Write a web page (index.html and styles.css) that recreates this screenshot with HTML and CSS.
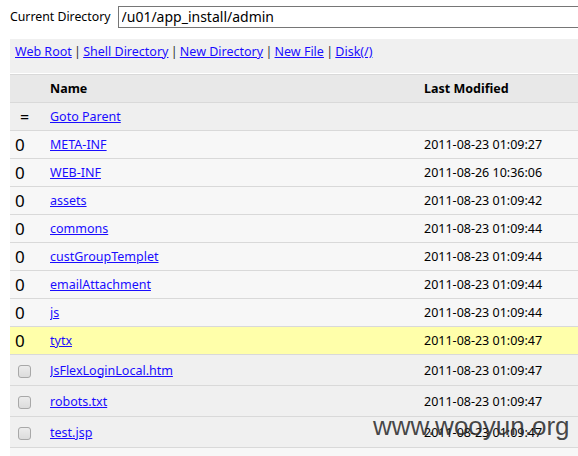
FILE: index.html
```html
<!DOCTYPE html>
<html>
<head>
<meta charset="utf-8">
<link rel="stylesheet" href="styles.css">
</head>
<body>
<div class="page">
  <form class="dirbar">
    <label class="dirlabel">Current Directory</label>
    <input class="dirinput" type="text" value="/u01/app_install/admin">
  </form>
  <div class="nav">
    <a href="#">Web Root</a> | <a href="#">Shell Directory</a> | <a href="#">New Directory</a> | <a href="#">New File</a> | <a href="#">Disk(/)</a>
  </div>
  <table class="files">
    <colgroup><col class="c1"><col class="c2"><col class="c3"></colgroup>
    <thead>
      <tr class="head"><th class="ic"></th><th class="nm">Name</th><th class="dt">Last Modified</th></tr>
    </thead>
    <tbody>
      <tr class="parent"><td class="ic eq">=</td><td class="nm"><a href="#">Goto Parent</a></td><td class="dt"></td></tr>
      <tr class="dir"><td class="ic">0</td><td class="nm"><a href="#">META-INF</a></td><td class="dt">2011-08-23 01:09:27</td></tr>
      <tr class="dir"><td class="ic">0</td><td class="nm"><a href="#">WEB-INF</a></td><td class="dt">2011-08-26 10:36:06</td></tr>
      <tr class="dir"><td class="ic">0</td><td class="nm"><a href="#">assets</a></td><td class="dt">2011-08-23 01:09:42</td></tr>
      <tr class="dir"><td class="ic">0</td><td class="nm"><a href="#">commons</a></td><td class="dt">2011-08-23 01:09:44</td></tr>
      <tr class="dir"><td class="ic">0</td><td class="nm"><a href="#">custGroupTemplet</a></td><td class="dt">2011-08-23 01:09:44</td></tr>
      <tr class="dir"><td class="ic">0</td><td class="nm"><a href="#">emailAttachment</a></td><td class="dt">2011-08-23 01:09:44</td></tr>
      <tr class="dir"><td class="ic">0</td><td class="nm"><a href="#">js</a></td><td class="dt">2011-08-23 01:09:44</td></tr>
      <tr class="dir hl"><td class="ic">0</td><td class="nm"><a href="#">tytx</a></td><td class="dt">2011-08-23 01:09:47</td></tr>
      <tr class="file"><td class="ic"><span class="cb"></span></td><td class="nm"><a href="#">JsFlexLoginLocal.htm</a></td><td class="dt">2011-08-23 01:09:47</td></tr>
      <tr class="file"><td class="ic"><span class="cb"></span></td><td class="nm"><a href="#">robots.txt</a></td><td class="dt">2011-08-23 01:09:47</td></tr>
      <tr class="file"><td class="ic"><span class="cb"></span></td><td class="nm"><a href="#">test.jsp</a></td><td class="dt">2011-08-23 01:09:47</td></tr>
      <tr class="foot"><td class="ic"></td><td class="nm">Download | Delete | Copy | Move | Archive</td><td class="dt"></td></tr>
    </tbody>
  </table>
  <div class="watermark">www.wooyun.org</div>
</div>
</body>
</html>
```
FILE: styles.css
```css
html, body {
  margin: 0;
  padding: 0;
  overflow: hidden;
  background: #fff;
}
body {
  font-family: "Noto Sans", "Open Sans", sans-serif;
  font-size: 12.5px;
  color: #000;
}
.page {
  position: relative;
  padding: 5px 0 0 10px;
  width: 640px;
}
.dirbar {
  display: flex;
  align-items: center;
  gap: 7px;
  margin: 0;
  height: 23px;
}
.dirlabel {
  font-size: 12.3px;
}
.dirinput {
  box-sizing: border-box;
  height: 22px;
  width: 520px;
  border: 1px solid #767676;
  padding: 0 3px;
  font-family: "Noto Sans", sans-serif;
  font-size: 14px;
  color: #000;
}
.nav {
  margin-top: 11px;
  background: #f0f0f0;
  height: 34px;
  box-sizing: border-box;
  padding: 4px 0 0 5px;
  color: #333;
  word-spacing: -1px;
}
.nav a {
  word-spacing: 0;
}
a {
  color: #1a0dff;
  text-decoration: underline;
}
.files {
  width: 100%;
  table-layout: fixed;
  border-collapse: collapse;
  margin-top: 1px;
}
.c1 { width: 40px; }
.c2 { width: 374px; }
.files th, .files td {
  padding: 0;
  text-align: left;
  border-top: 1px solid #d9d9d9;
  white-space: nowrap;
  overflow: hidden;
}
.files th {
  font-weight: bold;
  height: 27px;
  background: #e8e8e8;
}
.files td {
  height: 27px;
}
.files .ic {
  padding-left: 5px;
  font-size: 17px;
}
.files .eq {
  padding-left: 10px;
  font-size: 16px;
}
.parent td { background: #efefef; }
.dir td { background: #f7f7f7; }
.hl td { background: #ffffaa; }
.file td { background: #f0f0f0; height: 30px; }
.foot td { background: #f7f7f7; height: 27px; color: #333; vertical-align: top; padding-top: 6px; }
.cb {
  display: inline-block;
  vertical-align: middle;
  box-sizing: border-box;
  width: 13px;
  height: 13px;
  margin-left: 3px;
  border: 1px solid #a8a8a8;
  border-radius: 3px;
  background: linear-gradient(#ececec, #dcdcdc);
}
.watermark {
  position: absolute;
  left: 373px;
  top: 411px;
  font-family: "Liberation Sans", Arial, sans-serif;
  font-size: 26px;
  color: rgba(40, 40, 40, 0.85);
}
```
